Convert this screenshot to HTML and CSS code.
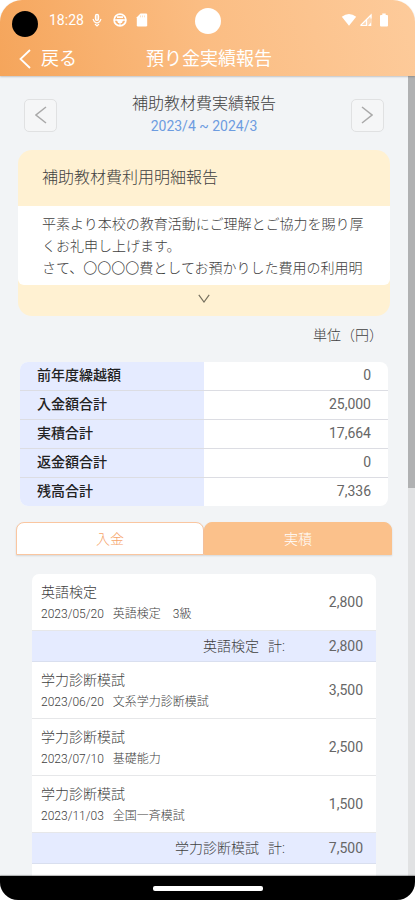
FILE: index.html
```html
<!DOCTYPE html>
<html lang="ja">
<head>
<meta charset="utf-8">
<meta name="viewport" content="width=device-width, initial-scale=1">
<title>預り金実績報告</title>
<link rel="stylesheet" href="styles.css">
</head>
<body>
<div class="screen">
  <header class="header">
    <div class="status">
      <span class="status-side">
        <span class="dot dot-black"></span>
        <span class="clock">18:28</span>
        <svg class="icon mic" width="10" height="14" viewBox="0 0 10 14" fill="none" stroke="#fff" stroke-width="1.2"><rect x="3.4" y="1.400" width="3.2" height="6" rx="1.6" fill="#fff" fill-opacity=".5"/><path d="M1 6L2.400 8.800L5 10L7.600 8.800L9 6M3 11L5 13L7 11"/></svg>
        <svg class="icon wheel" width="14" height="14" viewBox="0 0 14 14" fill="none" stroke="#fff" stroke-width="1.700"><circle cx="7" cy="7" r="5.900"/><path d="M1.500 7H12.500M4 4.200H10"/><path d="M4.500 7H9.500L8.500 9.500H5.500ZM7 9V12.500" fill="#fff" stroke-width="1.200"/></svg>
        <svg class="icon" width="12" height="14" viewBox="0 0 12 14" fill="#fff"><path d="M4.500 .5H10Q11.200 .5 11.200 1.700V12.300Q11.200 13.500 10 13.500H2Q.8 13.500 .8 12.300V4.200Z"/><path d="M4.500 2.500V4.300M6.500 2.500V4.300M8.500 2.500V4.300" stroke="#fbd9b6" stroke-width=".8"/></svg>
      </span>
      <span class="dot dot-white"></span>
      <span class="status-side status-right">
        <svg class="icon" width="16" height="14" viewBox="0 0 16 14" fill="#fff"><path d="M.8 3.700Q8-1.800 15.200 3.700L8 12.800Z"/></svg>
        <svg class="icon" width="14" height="14" viewBox="0 0 14 14"><path d="M1 13L13 1V13Z" fill="#fff" fill-opacity=".3"/><path d="M1.500 12.500L12 2V5.500M1.500 12.500H7.500V6.500" fill="none" stroke="#fff" stroke-width="1.200"/><path d="M9 13L12 9.500V13Z" fill="#fff"/></svg>
        <svg class="icon battery" width="10" height="14" viewBox="0 0 10 14" fill="#fff"><path d="M3.300 .5H6.700V2H8Q9 2 9 3V12.500Q9 13.500 8 13.500H2Q1 13.500 1 12.500V3Q1 2 2 2H3.300Z"/></svg>
      </span>
    </div>
    <div class="titlebar">
      <a class="back" href="#"><svg width="12" height="20" viewBox="0 0 12 20" fill="none" stroke="#fff" stroke-width="1.800"><path d="M11 1L1.500 10L11 19"/></svg>戻る</a>
      <h1 class="title">預り金実績報告</h1>
    </div>
  </header>

  <div class="body">
    <main class="content">
      <div class="period">
        <button class="step" type="button" aria-label="前の期間"><svg width="12" height="18" viewBox="0 0 12 18" fill="none" stroke="#a9a9a9" stroke-width="1.500"><path d="M11 1L1 9L11 17"/></svg></button>
        <div class="period-text">
          <h2>補助教材費実績報告</h2>
          <p>2023/4 ~ 2024/3</p>
        </div>
        <button class="step" type="button" aria-label="次の期間"><svg width="12" height="18" viewBox="0 0 12 18" fill="none" stroke="#a9a9a9" stroke-width="1.500"><path d="M1 1L11 9L1 17"/></svg></button>
      </div>

      <section class="notice">
        <h3>補助教材費利用明細報告</h3>
        <div class="notice-text">
          <p>平素より本校の教育活動にご理解とご協力を賜り厚くお礼申し上げます。</p>
          <p>さて、〇〇〇〇費としてお預かりした費用の利用明</p>
        </div>
        <button class="expand" type="button" aria-label="続きを表示"><svg width="12" height="9" viewBox="0 0 12 9" fill="none" stroke="#77715f" stroke-width="1.200"><path d="M.8 .8L6 8L11.200 .8"/></svg></button>
      </section>

      <p class="unit">単位（円）</p>

      <table class="summary">
        <tr><th scope="row">前年度繰越額</th><td>0</td></tr>
        <tr><th scope="row">入金額合計</th><td>25,000</td></tr>
        <tr><th scope="row">実積合計</th><td>17,664</td></tr>
        <tr><th scope="row">返金額合計</th><td>0</td></tr>
        <tr><th scope="row">残高合計</th><td>7,336</td></tr>
      </table>

      <div class="tabs">
        <button class="tab" type="button">入金</button>
        <button class="tab tab-active" type="button">実積</button>
      </div>

      <ul class="list">
        <li class="item"><div class="entry"><p>英語検定</p><p class="detail"><span>2023/05/20</span><span>英語検定　3級</span></p></div><span class="amount">2,800</span></li>
        <li class="subtotal"><span class="group">英語検定</span><span>計:</span><span class="amount">2,800</span></li>
        <li class="item"><div class="entry"><p>学力診断模試</p><p class="detail"><span>2023/06/20</span><span>文系学力診断模試</span></p></div><span class="amount">3,500</span></li>
        <li class="item"><div class="entry"><p>学力診断模試</p><p class="detail"><span>2023/07/10</span><span>基礎能力</span></p></div><span class="amount">2,500</span></li>
        <li class="item"><div class="entry"><p>学力診断模試</p><p class="detail"><span>2023/11/03</span><span>全国一斉模試</span></p></div><span class="amount">1,500</span></li>
        <li class="subtotal"><span class="group">学力診断模試</span><span>計:</span><span class="amount">7,500</span></li>
        <li class="item"></li>
      </ul>
    </main>
    <div class="track"><div class="thumb"></div></div>
  </div>

  <footer class="navbar"><span class="handle"></span></footer>
</div>
</body>
</html>
```

FILE: styles.css
```css
* { box-sizing: border-box; }
body, h1, h2, h3, p, ul { margin: 0; padding: 0; font-weight: 300; }
body {
  background: #fff;
  color: #404040;
  font-family: Roboto, "Noto Sans CJK JP", sans-serif;
  font-size: 14px;
  line-height: 22px;
}
button { font: inherit; padding: 0; margin: 0; border: 0; background: none; }
svg { display: block; flex: none; }

.screen { display: flex; flex-direction: column; height: 100vh; }

.header {
  flex: none;
  background: linear-gradient(75deg, #f5a55b, #fbbd83 50%, #fdcb9b);
  border-radius: 22px 22px 0 0;
  box-shadow: 0 1px 2px rgba(0, 0, 0, .2);
  color: #fff;
  z-index: 1;
}
.status {
  display: grid;
  grid-template-columns: 1fr auto 1fr;
  height: 42px;
  padding: 0 12px;
}
.status-side { display: flex; align-items: center; height: 40px; }
.status-right { justify-content: flex-end; gap: 2px; padding-right: 14px; }
.battery { margin-left: 4px; }
.dot { width: 26px; height: 26px; border-radius: 50%; }
.dot-black { background: #000; margin: 8px 11px 0 0; }
.dot-white { background: #fff; margin-top: 8px; }
.clock { font-weight: 400; }
.mic { margin: 0 11px 0 8px; }
.wheel { margin-right: 9px; }

.titlebar {
  display: grid;
  grid-template-columns: 1fr auto 1fr;
  align-items: center;
  height: 34px;
  padding: 0 16px 0 19px;
  font-size: 18px;
}
.back { display: flex; align-items: center; gap: 10px; color: #fff; text-decoration: none; font-weight: 400; }
.title { font-size: 18px; font-weight: 400; }

.body { display: flex; flex: 1; min-height: 0; background: #f2f4f6; }
.content { flex: 1; min-width: 0; overflow: hidden; padding: 0 16px; }
.track { width: 7px; background: #e1e2e3; }
.thumb { height: 412px; background: #b0b1b2; }

.period { display: flex; justify-content: space-between; align-items: center; padding: 17px 8px 0; }
.period-text { text-align: center; }
.period-text h2 { font-size: 16px; }
.period-text p { color: #6d9ce0; font-weight: 400; }
.step {
  display: flex;
  align-items: center;
  justify-content: center;
  width: 33px;
  height: 33px;
  border: 1px solid #e0e1e2;
  border-radius: 5px;
  background: #f5f6f7;
}

.notice { margin: 13px 2px 0; border-radius: 14px; background: #fff1d2; overflow: hidden; }
.notice h3 { font-size: 16px; line-height: 56px; padding-left: 24px; }
.notice-text { background: #fff; border-radius: 0 0 6px 6px; padding: 7px 24px 6px; }
.expand { display: flex; width: 100%; height: 31px; justify-content: center; align-items: flex-start; padding-top: 9px; }

.unit { text-align: right; margin: 8px 9px 0 0; }

.summary {
  width: calc(100% - 8px);
  margin: 16px 4px 0;
  border-spacing: 0;
  border-radius: 8px;
  overflow: hidden;
  background: #fff;
}
.summary th, .summary td { height: 29px; padding: 0 17px 2px; line-height: 20px; border-bottom: 1px solid #dcdde3; }
.summary th { width: 50%; background: #e5ebff; text-align: left; font-weight: 500; color: #222; }
.summary td { text-align: right; font-weight: 400; color: #666; }
.summary tr:last-child > * { height: 28px; border-bottom: 0; }

.tabs { display: flex; margin-top: 16px; height: 33px; }
.tab {
  flex: 1;
  border: 1px solid #fac6a0;
  border-radius: 8px 8px 0 0;
  background: #fff;
  color: #f6a56b;
  box-shadow: 0 1px 2px rgba(0, 0, 0, .12);
}
.tab-active { background: #fbc18b; color: #fff; border-color: #fbc18b; }

.list { list-style: none; margin: 19px 16px 0; border-radius: 7px; overflow: hidden; }
.item, .subtotal { display: flex; align-items: center; padding: 0 13px 0 9px; }
.item { height: 57px; justify-content: space-between; background: #fff; border-bottom: 1px solid #e6e7e9; }
.subtotal { height: 31px; justify-content: flex-end; background: #e5ebff; border-bottom: 1px solid #d9dfef; }
.entry { padding-top: 2px; }
.group { margin-right: 9px; }
.detail { display: flex; gap: 9px; font-size: 12px; }
.amount { width: 78px; text-align: right; font-weight: 400; color: #666; }

.navbar {
  flex: none;
  display: flex;
  justify-content: center;
  align-items: center;
  height: 24px;
  background: #000;
  border-radius: 0 0 18px 18px;
  box-shadow: 0 -1px 1px rgba(0, 0, 0, .3);
  z-index: 1;
}
.handle { width: 110px; height: 5px; border-radius: 2px; background: #fff; }
```
